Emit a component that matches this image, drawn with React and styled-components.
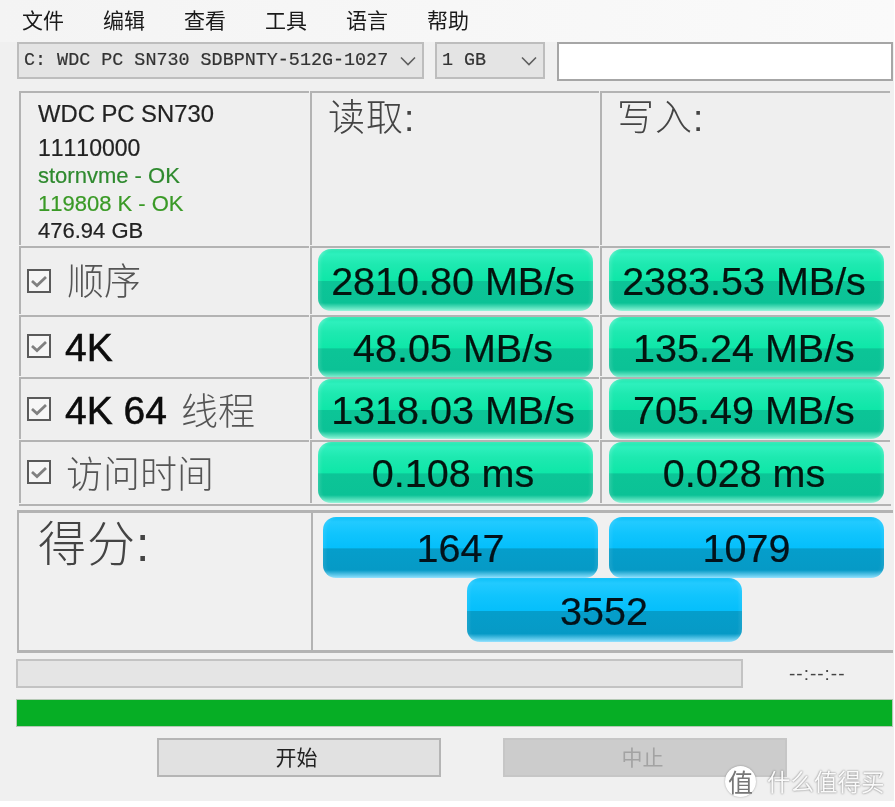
import React from 'react';
import styled, { createGlobalStyle } from 'styled-components';

const CJK = `"Liberation Sans", "Noto Sans CJK SC", sans-serif`;
const LINE = '#b3b3b3';

const GlobalStyle = createGlobalStyle`
  html, body {
    margin: 0;
    padding: 0;
    background: #fff;
  }
`;

const Window = styled.div`
  position: relative;
  width: 894px;
  height: 801px;
  overflow: hidden;
  background: #f0f0f0;
  font-family: ${CJK};
  font-kerning: none;
  color: #1a1a1a;
  filter: blur(0.45px);
`;

const MenuBar = styled.nav`
  display: flex;
  gap: 39px;
  height: 42px;
  padding: 0 0 5px 22px;
  align-items: center;
  box-sizing: border-box;
  background: linear-gradient(to right, #f4f4f4, #fafafa);
  font-size: 21px;
`;

const Toolbar = styled.div`
  display: flex;
  height: 39px;
  padding-left: 17px;
`;

const SelectBox = styled.div`
  display: flex;
  align-items: center;
  justify-content: space-between;
  box-sizing: border-box;
  width: ${(p) => p.$width}px;
  height: 37px;
  margin-right: ${(p) => p.$gap}px;
  padding: 0 6px 0 5px;
  background: #e4e4e4;
  border: 2px solid #bdbdbd;
  font-family: "Liberation Mono", monospace;
  font-size: 18.4px;
  color: #333;
  -webkit-text-stroke: 0.2px #333;
  white-space: pre;
`;

const TextInput = styled.div`
  box-sizing: border-box;
  width: 336px;
  height: 39px;
  background: #fff;
  border: 2px solid #a6a6a6;
`;

const Table = styled.div`
  display: grid;
  grid-template-columns: 290px 289px 290px;
  grid-template-rows: 154px 68px 61px 62px 63px;
  gap: 1px;
  width: 872px;
  margin: 10px 0 0 19px;
  padding-bottom: 1px;
  border-bottom: 2px solid ${LINE};
`;

const Cell = styled.div`
  box-sizing: border-box;
  border-top: 2px solid ${LINE};
  border-left: 2px solid ${LINE};
  background: #efefef;
`;

const InfoCell = styled(Cell)`
  display: flex;
  flex-direction: column;
  padding: 1px 0 0 17px;
`;

const InfoLine = styled.div`
  height: ${(p) => p.$height}px;
  line-height: ${(p) => p.$height}px;
  font-size: ${(p) => p.$size}px;
  color: ${(p) => p.$color || '#222'};
  -webkit-text-stroke: 0.2px ${(p) => p.$color || '#222'};
  white-space: nowrap;
`;

const HeadCell = styled(Cell)`
  padding: 4px 0 0 ${(p) => p.$left}px;
  font-size: 37px;
  font-weight: 300;
  letter-spacing: 1px;
  line-height: 44px;
  color: #444;
`;

const LabelCell = styled(Cell)`
  display: flex;
  align-items: center;
  padding-left: 6px;
  padding-bottom: 1px;
  white-space: nowrap;
`;

const CheckBox = styled.svg`
  flex: none;
  width: 24px;
  height: 24px;
  margin-right: ${(p) => p.$gap}px;
`;

const LabelText = styled.span`
  margin-bottom: ${(p) => p.$lift || 0}px;
  font-size: 37px;
  font-weight: 300;
  color: #555;
`;

const LabelLatin = styled.span`
  margin-top: 4px;
  margin-right: ${(p) => p.$gap || 0}px;
  font-size: 39px;
  color: #0c0c0c;
  -webkit-text-stroke: 0.5px #0c0c0c;
`;

const ValueCell = styled(Cell)`
  display: flex;
  align-items: flex-start;
  padding: ${(p) => p.$top}px 0 0 ${(p) => p.$left}px;
`;

const Gloss = styled.div`
  display: flex;
  align-items: center;
  justify-content: center;
  box-sizing: border-box;
  width: 275px;
  padding: 2px 5px 0 0;
  border-radius: 13px;
  font-size: 39.5px;
  color: #04140f;
  -webkit-text-stroke: 0.2px #04140f;
  white-space: nowrap;
`;

const GreenValue = styled(Gloss)`
  height: ${(p) => p.$height}px;
  box-shadow: inset 0 2px 3px rgba(255, 255, 255, 0.12), inset 3px 0 3px rgba(255, 255, 255, 0.1), inset -3px 0 3px rgba(255, 255, 255, 0.1);
  background: linear-gradient(
    to bottom,
    #12e6aa 0,
    #2ef0bd 8%,
    #1ee9b0 25%,
    #0ee7a8 51%,
    #0cc597 52%,
    #0bc296 87%,
    #8ff5d8 100%
  );
`;

const ScorePanel = styled.div`
  display: grid;
  grid-template-columns: 294px 1fr;
  box-sizing: border-box;
  width: 876px;
  height: 143px;
  margin: 4px 0 0 17px;
  border-top: 3px solid ${LINE};
  border-bottom: 3px solid ${LINE};
`;

const ScoreTitle = styled.div`
  box-sizing: border-box;
  border-left: 2px solid ${LINE};
  padding: 2px 0 0 19px;
  font-size: 48px;
  font-weight: 300;
  letter-spacing: 1px;
  line-height: 60px;
  color: #444;
`;

const ScoreBody = styled.div`
  display: grid;
  grid-template-columns: 275px 275px;
  grid-template-rows: 61px 64px;
  column-gap: 11px;
  align-content: start;
  box-sizing: border-box;
  border-left: 2px solid ${LINE};
  padding: 4px 0 0 10px;
`;

const BlueValue = styled(Gloss)`
  padding: 2px 0 0;
  color: #03121a;
  -webkit-text-stroke: 0.2px #03121a;
  box-shadow: inset 3px 0 3px rgba(255, 255, 255, 0.08), inset -3px 0 3px rgba(255, 255, 255, 0.08);
  background: linear-gradient(
    to bottom,
    #0dc0f8 0,
    #22caff 8%,
    #10c4fd 28%,
    #05bffb 51%,
    #059ecb 52%,
    #069ac6 87%,
    #8fe2ff 100%
  );
  ${(p) => p.$total && `
    grid-column: 1 / 3;
    justify-self: center;
    margin-left: 1px;
  `}
`;

const ProgressRow = styled.div`
  display: flex;
  align-items: center;
  margin: 6px 0 0 16px;
`;

const ProgressTrack = styled.div`
  box-sizing: border-box;
  width: 727px;
  height: 29px;
  background: #e5e5e5;
  border: 2px solid #c3c3c3;
`;

const TimeLabel = styled.div`
  margin-left: 46px;
  font-size: 19px;
  color: #444;
  letter-spacing: 1px;
`;

const GreenBar = styled.div`
  box-sizing: border-box;
  width: 877px;
  height: 28px;
  margin: 11px 0 0 16px;
  background: #06ae25;
  border: 1px solid #b5c9b5;
`;

const ButtonRow = styled.div`
  display: flex;
  gap: 62px;
  margin: 11px 0 0 157px;
`;

const ActionButton = styled.div`
  display: flex;
  align-items: center;
  justify-content: center;
  box-sizing: border-box;
  width: 284px;
  height: 39px;
  padding: 0 5px 3px 0;
  font-size: 21px;
  background: ${(p) => (p.$disabled ? '#cccccc' : '#e1e1e1')};
  border: 2px solid ${(p) => (p.$disabled ? '#c6c6c6' : '#b5b5b5')};
  color: ${(p) => (p.$disabled ? '#a3a3a3' : '#222')};
`;

const Watermark = styled.div`
  position: absolute;
  left: 725px;
  top: 764px;
  display: flex;
  align-items: center;
  gap: 11px;
`;

const WatermarkBadge = styled.div`
  display: flex;
  align-items: center;
  justify-content: center;
  width: 31px;
  height: 31px;
  border-radius: 50%;
  background: #fff;
  box-shadow: 0 0 2px rgba(0, 0, 0, 0.35);
  font-size: 25px;
  color: #777;
`;

const WatermarkText = styled.span`
  font-size: 23.5px;
  color: #fafafa;
  text-shadow: 0 0 2px rgba(0, 0, 0, 0.6);
  white-space: nowrap;
`;

const Chevron = () => (
  <svg width="16" height="10" viewBox="0 0 16 10" fill="none" stroke="#5f5f5f" strokeWidth="1.6">
    <path d="M1 1.5 L8 8.5 L15 1.5" />
  </svg>
);

const Check = ({ gap }) => (
  <CheckBox $gap={gap} viewBox="0 0 24 24">
    <rect x="1" y="1" width="22" height="22" fill="#f6f6f6" stroke="#5a5a5a" strokeWidth="2" />
    <path d="M5 12 L10 16.5 L19 8" fill="none" stroke="#808080" strokeWidth="2.8" />
  </CheckBox>
);

const rows = [
  { key: 'seq', top: 1, height: 62, read: '2810.80 MB/s', write: '2383.53 MB/s', gap: 16, label: <LabelText $lift={4}>顺序</LabelText> },
  { key: '4k', top: 0, height: 61, read: '48.05 MB/s', write: '135.24 MB/s', gap: 14, label: <LabelLatin>4K</LabelLatin> },
  {
    key: '4k64',
    top: 0,
    height: 60,
    read: '1318.03 MB/s',
    write: '705.49 MB/s',
    gap: 14,
    label: (
      <>
        <LabelLatin $gap={14}>4K 64</LabelLatin>
        <LabelText>线程</LabelText>
      </>
    ),
  },
  { key: 'access', top: 0, height: 61, read: '0.108 ms', write: '0.028 ms', gap: 15, label: <LabelText>访问时间</LabelText> },
];

export default function App() {
  return (
    <Window>
      <GlobalStyle />
      <MenuBar>
        {['文件', '编辑', '查看', '工具', '语言', '帮助'].map((item) => (
          <span key={item}>{item}</span>
        ))}
      </MenuBar>
      <Toolbar>
        <SelectBox $width={407} $gap={11}>
          C: WDC PC SN730 SDBPNTY-512G-1027
          <Chevron />
        </SelectBox>
        <SelectBox $width={110} $gap={12}>
          1 GB
          <Chevron />
        </SelectBox>
        <TextInput />
      </Toolbar>
      <Table>
        <InfoCell>
          <InfoLine $height={40} $size={23.8}>WDC PC SN730</InfoLine>
          <InfoLine $height={28} $size={23}>11110000</InfoLine>
          <InfoLine $height={28} $size={22} $color="#2f8a2f">stornvme - OK</InfoLine>
          <InfoLine $height={28} $size={22} $color="#3a9a26">119808 K - OK</InfoLine>
          <InfoLine $height={26} $size={22}>476.94 GB</InfoLine>
        </InfoCell>
        <HeadCell $left={16}>读取:</HeadCell>
        <HeadCell $left={15}>写入:</HeadCell>
        {rows.map((row) => (
          <React.Fragment key={row.key}>
            <LabelCell>
              <Check gap={row.gap} />
              {row.label}
            </LabelCell>
            <ValueCell $left={6} $top={row.top}>
              <GreenValue $height={row.height}>{row.read}</GreenValue>
            </ValueCell>
            <ValueCell $left={7} $top={row.top}>
              <GreenValue $height={row.height}>{row.write}</GreenValue>
            </ValueCell>
          </React.Fragment>
        ))}
      </Table>
      <ScorePanel>
        <ScoreTitle>得分:</ScoreTitle>
        <ScoreBody>
          <BlueValue>1647</BlueValue>
          <BlueValue>1079</BlueValue>
          <BlueValue $total>3552</BlueValue>
        </ScoreBody>
      </ScorePanel>
      <ProgressRow>
        <ProgressTrack />
        <TimeLabel>--:--:--</TimeLabel>
      </ProgressRow>
      <GreenBar />
      <ButtonRow>
        <ActionButton>开始</ActionButton>
        <ActionButton $disabled>中止</ActionButton>
      </ButtonRow>
      <Watermark>
        <WatermarkBadge>值</WatermarkBadge>
        <WatermarkText>什么值得买</WatermarkText>
      </Watermark>
    </Window>
  );
}
